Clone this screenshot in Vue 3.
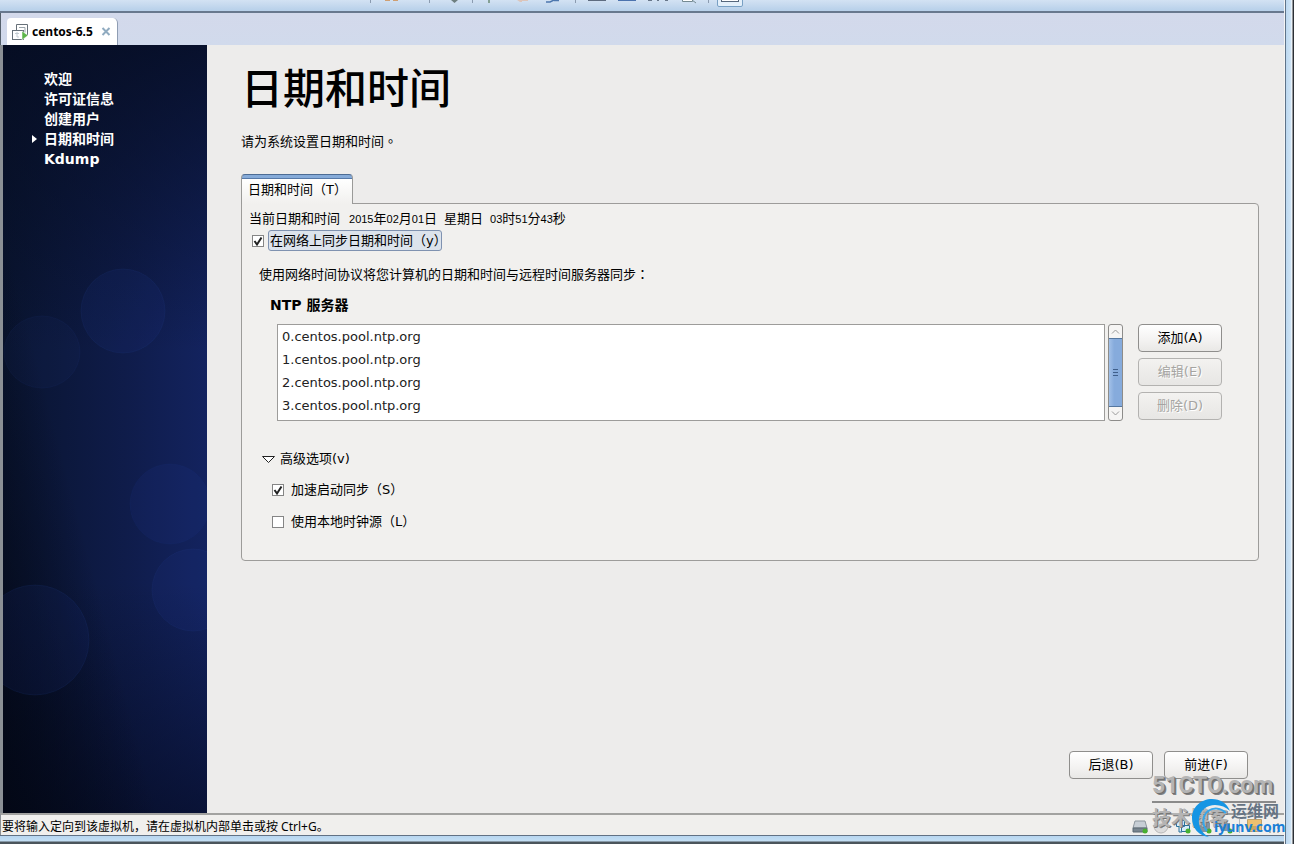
<script setup>
import { ref } from 'vue'

const steps = ['欢迎', '许可证信息', '创建用户', '日期和时间', 'Kdump']
const current = 3
const servers = [0, 1, 2, 3].map((n) => `${n}.centos.pool.ntp.org`)
const syncNetwork = ref(true)
const fastSync = ref(true)
const localClock = ref(false)
const actions = [
  { label: '添加(A)', disabled: false },
  { label: '编辑(E)', disabled: true },
  { label: '删除(D)', disabled: true },
]
</script>

<template>
  <div class="window">
    <div class="client">
      <header class="toolbar">
        <svg class="tools" width="374" height="12" viewBox="0 0 374 12" aria-hidden="true">
          <g fill="#8b9bb0">
            <rect x="0" y="0" width="1" height="3" />
            <rect x="59" y="0" width="1" height="3" />
            <rect x="102" y="0" width="1" height="3" />
            <rect x="205" y="0" width="1" height="3" />
            <rect x="338" y="0" width="1" height="3" />
          </g>
          <path d="M15 0h5v1h-5zM23 0h5v1h-5z" fill="#cf9f72" />
          <path d="M81 0h7l-3.500 3z" fill="#6e7f80" />
          <rect x="118" y="0" width="2" height="3" fill="#84a094" />
          <path d="M147 0h11v1h-6v1h-2z" fill="#dcc5bb" />
          <path d="M176 2h4l4-2M184 0.500h5" fill="none" stroke="#4d77ae" stroke-width="1.500" />
          <rect x="218" y="0" width="18" height="1" fill="#5e6c80" />
          <rect x="248" y="0" width="18" height="1" fill="#4c73ae" />
          <path d="M278 0h4v1h-4zM287 0h2v1h-2zM295 0h3v1h-3z" fill="#68778a" />
          <path d="M312.500 0v1.500h10V0M322 0l4 3" fill="#fff" stroke="#758a92" />
          <rect x="347.500" y="-4.500" width="25" height="11" rx="1.500" fill="#e3effa" stroke="#78a0c4" />
          <rect x="351.500" y="-5.500" width="17" height="7" fill="#fff" stroke="#56677c" />
        </svg>
      </header>

      <div class="tabstrip">
        <div class="vm-tab">
          <svg width="17" height="18" viewBox="0 0 17 18" aria-hidden="true">
            <path d="M4.500 7V1.500h11V12H11" fill="#fff" stroke="#667078" />
            <path d="M7 4.500h6v5" fill="none" stroke="#9aa4ab" />
            <rect x="0.500" y="7.500" width="11" height="9" fill="#fff" stroke="#667078" />
            <path d="M3 10.500h4M5 9v5h2" fill="none" stroke="#c3ccd2" />
            <path d="M10 8l6 4.500-6 4.500z" fill="#5cb548" stroke="#fff" stroke-width="0.500" />
          </svg>
          <span>centos-6.5</span>
          <button class="close" type="button" aria-label="关闭">
            <svg width="10" height="9" viewBox="0 0 10 9"><path d="M1.500 1l7 7M8.500 1l-7 7" stroke="#90abc0" stroke-width="2" /></svg>
          </button>
        </div>
      </div>

      <div class="screen">
        <aside class="sidebar">
          <svg class="bubbles" width="204" height="768" viewBox="0 0 204 768" aria-hidden="true">
            <g fill="#2443a0" fill-opacity="0.110" stroke="#355cb4" stroke-opacity="0.100">
              <ellipse cx="120" cy="266" rx="42" ry="42" />
              <ellipse cx="39" cy="307" rx="38" ry="36" fill-opacity="0.070" stroke-opacity="0.070" />
              <circle cx="167" cy="459" r="40" stroke-opacity="0.060" />
              <circle cx="190" cy="545" r="41" stroke-opacity="0.090" />
              <ellipse cx="32" cy="595" rx="54" ry="55" />
            </g>
          </svg>
          <ol class="steps">
            <li v-for="(step, i) in steps" :key="step" :class="{ active: i === current }">{{ step }}</li>
          </ol>
        </aside>

        <main class="main">
          <h1>日期和时间</h1>
          <p class="intro">请为系统设置日期和时间<span class="centered">。</span></p>

          <button class="page-tab" type="button">日期和时间（T<span class="half">）</span></button>
          <section class="panel">
            <p class="now">
              <span>当前日期和时间</span>
              <span><i>2015</i>年<i>02</i>月<i>01</i>日</span>
              <span>星期日</span>
              <span><i>03</i>时<i>51</i>分<i>43</i>秒</span>
            </p>
            <label class="check sync">
              <span class="box">
                <input v-model="syncNetwork" type="checkbox" />
                <svg v-if="syncNetwork" width="12" height="12" viewBox="0 0 12 12"><path d="M2.500 6l2.500 3.500L9.500 2.500" /></svg>
              </span>
              <span class="focused">在网络上同步日期和时间（y<span class="half">）</span></span>
            </label>
            <p class="hint">使用网络时间协议将您计算机的日期和时间与远程时间服务器同步<span class="centered">：</span></p>
            <h2>NTP 服务器</h2>

            <div class="servers">
              <ul class="list">
                <li v-for="server in servers" :key="server">{{ server }}</li>
              </ul>
              <div class="scrollbar">
                <button type="button" aria-label="向上">
                  <svg width="9" height="5" viewBox="0 0 9 5"><path d="M1 4.500l3.500-3.500L8 4.500" /></svg>
                </button>
                <div class="thumb"><b></b><b></b><b></b></div>
                <button type="button" aria-label="向下">
                  <svg width="9" height="5" viewBox="0 0 9 5"><path d="M1 0.500l3.500 3.500L8 0.500" /></svg>
                </button>
              </div>
              <div class="actions">
                <button v-for="a in actions" :key="a.label" class="btn" type="button" :disabled="a.disabled">{{ a.label }}</button>
              </div>
            </div>

            <button class="expander" type="button">
              <svg width="15" height="9" viewBox="0 0 15 9"><path d="M1.500 1.500h12l-6 6z" fill="#fff" stroke="#222" /></svg>
              高级选项(v)
            </button>
            <label class="check option">
              <span class="box">
                <input v-model="fastSync" type="checkbox" />
                <svg v-if="fastSync" width="12" height="12" viewBox="0 0 12 12"><path d="M2.500 6l2.500 3.500L9.500 2.500" /></svg>
              </span>
              <span>加速启动同步（S<span class="half">）</span></span>
            </label>
            <label class="check option">
              <span class="box">
                <input v-model="localClock" type="checkbox" />
                <svg v-if="localClock" width="12" height="12" viewBox="0 0 12 12"><path d="M2.500 6l2.500 3.500L9.500 2.500" /></svg>
              </span>
              <span>使用本地时钟源（L<span class="half">）</span></span>
            </label>
          </section>

          <footer class="nav">
            <button class="btn" type="button">后退(B)</button>
            <button class="btn" type="button">前进(F)</button>
          </footer>
        </main>
      </div>

      <div class="status">
        <span>要将输入定向到该虚拟机，请在虚拟机内部单击或按 Ctrl+G。</span>
        <svg class="devices" width="148" height="18" viewBox="0 0 148 18" aria-hidden="true">
          <path d="M3 3h10l2 7H1z" fill="#c7ced5" stroke="#8d969e" />
          <path d="M1 10h14v4H1z" fill="#78858f" stroke="#5b6872" />
          <circle cx="13" cy="13" r="2.500" fill="#47b02f" />
          <circle cx="29" cy="8" r="7" fill="#dcdcdc" stroke="#b8b8b8" />
          <circle cx="29" cy="8" r="2" fill="#f6f6f6" stroke="#b8b8b8" />
          <path d="M44.500 2.500h8v6h-8zM49.500 7.500h8v6h-8zM47 9v5h3" fill="#d8ecf8" stroke="#2a719b" />
          <circle cx="56" cy="13" r="2.500" fill="#47b02f" />
          <path d="M67 5h11v7H67zM69 12h8v2h-8z" fill="#8293a0" />
          <circle cx="77" cy="13" r="2.500" fill="#47b02f" />
          <path d="M89 5h9v8h-9z" fill="#8495a3" />
          <circle cx="98" cy="13" r="2.500" fill="#47b02f" />
          <path d="M107.500 1v14" stroke="#bababa" />
          <path d="M115.500 1.500h14v12h-14z" fill="#edc070" stroke="#bda16d" />
          <path d="M118 9h9M118 11h7" stroke="#a98c52" />
          <path d="M146 5v2M142 9v2M146 9v2M138 13v2M142 13v2M146 13v2" stroke="#b4b4b4" stroke-width="2" />
        </svg>
      </div>
      <div class="frame-bottom"></div>
    </div>
    <div class="frame-right"></div>

    <div class="watermark">
      <div class="cto">51CTO.com</div>
      <div class="blog">技术博客</div>
      <svg class="swirl" width="42" height="40" viewBox="0 0 42 40" aria-hidden="true">
        <path d="M39 13C36 5 29 1 21 1C10 1 1 9 1 20C1 30 8 38 18 39C11 35 7 29 8 21C9 12 16 7 24 7C30 7 35 9 39 13z" fill="#1595e4" />
        <path d="M35 15C30 10 23 9 17 13C11 18 11 27 16 33" fill="none" stroke="#35a6ea" stroke-width="2" />
      </svg>
      <div class="yw">运维网</div>
      <div class="iy">iyunv.com</div>
    </div>
  </div>
</template>

<style>
body {
  margin: 0;
}
</style>

<style scoped>
* {
  box-sizing: border-box;
}

.window {
  position: relative;
  display: flex;
  min-height: 100vh;
  font: 13px/20px "DejaVu Sans", "Noto Sans CJK SC", sans-serif;
  color: #000;
  overflow: hidden;
}

h1, h2, p, ul, ol {
  margin: 0;
  padding: 0;
  list-style: none;
}

button {
  margin: 0;
  padding: 0;
  border: 0;
  background: none;
  font: inherit;
  color: inherit;
}

svg {
  display: block;
  flex: none;
}

.client {
  flex: 1;
  min-width: 0;
  display: flex;
  flex-direction: column;
}

.toolbar {
  height: 13px;
  padding-left: 370px;
  background: linear-gradient(#d3e2f3, #b9d1ea 10px);
  border-bottom: 2px solid #68788e;
  overflow: hidden;
}

.tabstrip {
  height: 32px;
  padding: 5px 0 0 6px;
  border-left: 1px solid #55606c;
  background: linear-gradient(#d3d9eb, #d1daec);
}

.vm-tab {
  display: flex;
  align-items: center;
  width: 111px;
  height: 27px;
  padding-left: 5px;
  border-right: 1px solid #8f9db3;
  border-radius: 4px 5px 0 0;
  background: #fff;
  font: bold 12px/20px "Noto Sans", sans-serif;
}

.vm-tab span {
  margin-left: 3px;
  white-space: nowrap;
}

.close {
  margin-left: 8px;
}

.screen {
  flex: 1;
  display: flex;
  border-left: 3px solid #8b9095;
}

.sidebar {
  position: relative;
  flex: none;
  width: 204px;
  overflow: hidden;
  background:
    linear-gradient(to top right, rgba(3, 7, 20, 0.900), rgba(3, 7, 20, 0) 38%),
    linear-gradient(to bottom, rgba(5, 12, 32, 0.800), rgba(5, 12, 32, 0) 40%),
    linear-gradient(to top, rgba(3, 8, 28, 0.600), rgba(3, 8, 28, 0) 30%),
    linear-gradient(to right, #09142f, #0f1c4a 60%, #13235f);
}

.bubbles {
  position: absolute;
  left: 0;
  top: 0;
}

.steps {
  position: relative;
  padding: 24px 0 0 41px;
  color: #fff;
  font-size: 14px;
  font-weight: bold;
}

.steps li {
  position: relative;
}

.active::before {
  content: "";
  position: absolute;
  left: -12px;
  top: 6px;
  border: 4px solid transparent;
  border-left: 5px solid #fff;
  border-right: 0;
}

.main {
  flex: 1;
  display: flex;
  flex-direction: column;
  align-items: stretch;
  padding: 19px 25px 34px 34px;
  background: #edeceb;
}

h1 {
  font-size: 42px;
  line-height: 52px;
  font-weight: 500;
}

.intro {
  margin-top: 15px;
}

.centered {
  font-family: "Noto Sans CJK TC", sans-serif;
}

.half {
  font-feature-settings: "halt";
}

.page-tab {
  position: relative;
  align-self: flex-start;
  height: 30px;
  margin: 22px 0 -1px;
  padding: 0 12px 0 6px;
  border: 1px solid #9a9a98;
  border-top: 1px solid #4d6c94;
  border-bottom: 0;
  border-radius: 4px 4px 0 0;
  background: linear-gradient(#86abd9 3px, #5679a8 3px, #5679a8 4px, #fff 4px, #f1f0ee);
  white-space: nowrap;
}

.panel {
  padding: 5px 36px 28px 0;
  border: 1px solid #9d9c9a;
  border-radius: 0 4px 4px 4px;
  background: #f1f0ee;
}

.now {
  display: flex;
  gap: 7px;
  padding-left: 7px;
}

.now span:first-child {
  margin-right: 2px;
}

.now i {
  font-family: "Liberation Sans", sans-serif;
  font-size: 11px;
  font-style: normal;
}

.check {
  display: flex;
  align-items: center;
}

.box {
  position: relative;
  width: 12px;
  height: 12px;
}

.box input {
  display: block;
  appearance: none;
  width: 12px;
  height: 12px;
  margin: 0;
  border: 1px solid #858585;
  background: #fff;
}

.box svg {
  position: absolute;
  left: 0;
  top: 0;
  fill: none;
  stroke: #222;
  stroke-width: 2;
  pointer-events: none;
}

.sync {
  margin-top: 1px;
  padding-left: 10px;
}

.focused {
  margin-left: 4px;
  padding: 0 1px;
  border: 1px solid #7f92b0;
  border-radius: 3px;
  background: #dce3ec;
  line-height: 19px;
}

.hint {
  margin-top: 13px;
  padding-left: 17px;
}

h2 {
  margin-top: 10px;
  padding-left: 28px;
  font-size: 14px;
  font-weight: bold;
}

.servers {
  display: flex;
  margin-top: 9px;
  padding-left: 35px;
}

.list {
  flex: 1;
  padding: 0 4px 3px;
  border: 1px solid #9d9c9a;
  background: #fff;
  line-height: 23px;
  color: #222;
}

.scrollbar {
  display: flex;
  flex-direction: column;
  width: 15px;
  margin-left: 3px;
  border: 1px solid #8d8c8a;
  border-radius: 3px;
  background: #f6f5f4;
  overflow: hidden;
}

.scrollbar button {
  display: grid;
  place-items: center;
  height: 13px;
}

.scrollbar path {
  fill: none;
  stroke: #9a9a9a;
}

.thumb {
  flex: 1;
  display: flex;
  flex-direction: column;
  align-items: center;
  justify-content: center;
  gap: 2px;
  border: solid #55779f;
  border-width: 1px 0;
  background: linear-gradient(to right, #a3c1e8, #86abdc 40%, #86abdc);
}

.thumb b {
  width: 5px;
  height: 1px;
  background: #3f5f8b;
}

.actions {
  display: flex;
  flex-direction: column;
  gap: 6px;
  width: 84px;
  margin-left: 15px;
}

.btn {
  width: 84px;
  height: 28px;
  border: 1px solid #8f8e8c;
  border-radius: 4px;
  background: linear-gradient(#fff, #f3f2f1 60%, #e9e8e6);
}

.btn:disabled {
  border-color: #b3b2b0;
  background: linear-gradient(#f3f2f0, #e7e6e4);
  color: #a5a4a1;
  text-shadow: 1px 1px #fff;
}

.expander {
  display: flex;
  align-items: center;
  gap: 4px;
  margin: 28px 0 11px;
  padding-left: 19px;
}

.option {
  padding-left: 30px;
  gap: 7px;
}

.option + .option {
  margin-top: 12px;
}

.nav {
  display: flex;
  justify-content: flex-end;
  gap: 11px;
  margin-top: auto;
  padding-right: 11px;
}

.status {
  display: flex;
  align-items: center;
  justify-content: space-between;
  height: 22px;
  padding: 3px 0 0 1px;
  border-left: 1px solid #8b9095;
  border-top: 2px solid #a2a2a0;
  background: #f0efed;
  font: 12px/18px "Noto Sans", "Noto Sans CJK SC", sans-serif;
}

.devices {
  margin-right: 4px;
}

.frame-bottom {
  height: 9px;
  background: linear-gradient(#617184 1px, #b7d6f0 1px, #c3def4 6px, #4b555c 7px);
}

.frame-right {
  flex: none;
  width: 10px;
  background: linear-gradient(to right, #f4f4f4 1px, #5f7388 1px, #5f7388 2px, #bcd8f0 2px, #cfe4f5 7px, #fff 8px, #2b3036 9px);
}

.watermark {
  position: absolute;
  right: 0;
  bottom: 0;
  width: 144px;
  height: 74px;
  white-space: nowrap;
}

.watermark > * {
  position: absolute;
}

.cto {
  left: 2px;
  top: 1px;
  width: 124px;
  height: 32px;
  border-bottom: 2px solid #8a8a8a;
  font: bold 23px/30px Roboto, sans-serif;
  color: #b4b4b4;
  text-shadow: 1px 1px #707070, 2px 2px #808080;
}

.blog {
  left: 2px;
  top: 36px;
  font: bold 19px/22px "Noto Sans CJK SC", sans-serif;
  color: #b4b4b4;
  text-shadow: 1px 1px #777;
}

.swirl {
  left: 41px;
  top: 28px;
}

.yw {
  left: 81px;
  top: 30px;
  font: bold 16px/20px "Noto Sans CJK SC", sans-serif;
  color: #667484;
}

.iy {
  left: 64px;
  top: 48px;
  font: bold 14px/18px "Noto Sans", sans-serif;
  color: #1a80d8;
}
</style>
